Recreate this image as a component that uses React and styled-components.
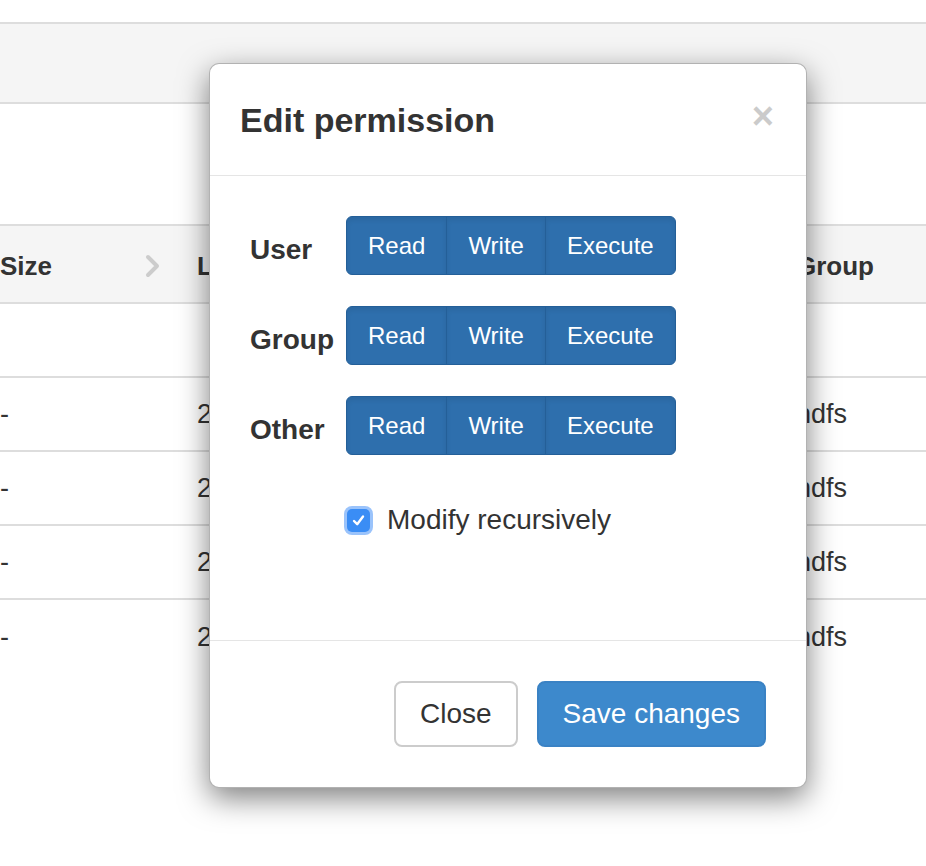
import React from 'react';
import styled, { createGlobalStyle } from 'styled-components';

const GlobalStyle = createGlobalStyle`
  html, body {
    margin: 0;
    padding: 0;
    background: #fff;
    font-family: "Liberation Sans", Arial, sans-serif;
    color: #333;
  }
`;

const Page = styled.div`
  position: relative;
  width: 926px;
  height: 866px;
  overflow: hidden;
  padding-top: 22px;
  box-sizing: border-box;
`;

const Toolbar = styled.div`
  height: 78px;
  background: #f5f5f5;
  border-top: 2px solid #ddd;
  border-bottom: 2px solid #ddd;
  margin-bottom: 120px;
`;

const Table = styled.div`
  display: flex;
  flex-direction: column;
`;

const Row = styled.div`
  display: grid;
  grid-template-columns: 145px 52px 599px 1fr;
  align-items: center;
  box-sizing: border-box;
  height: ${(p) => (p.head ? 80 : 74)}px;
  padding-top: ${(p) => (p.head ? 4 : 1)}px;
  background: ${(p) => (p.head ? '#f5f5f5' : '#fff')};
  border-top: ${(p) => (p.head ? '2px solid #ddd' : 'none')};
  border-bottom: ${(p) => (p.last ? 'none' : '2px solid #ddd')};
  font-size: ${(p) => (p.head ? 26 : 27)}px;
  font-weight: ${(p) => (p.head ? 'bold' : 'normal')};
  white-space: nowrap;
`;

const Cell = styled.div`
  overflow: hidden;
  display: flex;
  align-items: center;
`;

const Chevron = () => (
  <svg width="16" height="24" viewBox="0 0 16 24">
    <polyline points="3,3 12,12 3,21" fill="none" stroke="#ccc" strokeWidth="4" strokeLinejoin="round" strokeLinecap="round" />
  </svg>
);

const Modal = styled.div`
  position: absolute;
  left: 209px;
  top: 63px;
  width: 598px;
  box-sizing: border-box;
  background: #fff;
  border: 1px solid rgba(0, 0, 0, 0.3);
  border-radius: 10px;
  box-shadow: 0 10px 30px rgba(0, 0, 0, 0.5);
  display: flex;
  flex-direction: column;
`;

const Header = styled.div`
  height: 111px;
  display: flex;
  align-items: center;
  justify-content: space-between;
  padding: 0 32px 0 30px;
  border-bottom: 1px solid #e5e5e5;
`;

const Title = styled.h4`
  margin: 0;
  padding-top: 2px;
  font-size: 34px;
  font-weight: bold;
  line-height: 1.1;
  color: #333;
`;

const CloseX = styled.button`
  border: 0;
  background: none;
  padding: 0;
  margin-top: -8px;
  font-family: "Liberation Sans", Arial, sans-serif;
  font-size: 38px;
  font-weight: bold;
  line-height: 1;
  color: #000;
  opacity: 0.2;
`;

const Body = styled.div`
  height: 464px;
  box-sizing: border-box;
  padding: 40px 40px;
  display: flex;
  flex-direction: column;
  gap: 31px;
`;

const PermRow = styled.div`
  display: flex;
  align-items: flex-start;
`;

const Label = styled.div`
  width: 96px;
  padding-top: 20px;
  font-size: 28px;
  font-weight: bold;
  line-height: 28px;
  color: #333;
`;

const BtnGroup = styled.div`
  display: flex;
`;

const ToggleBtn = styled.button`
  height: 59px;
  padding: 0 21px;
  font-family: "Liberation Sans", Arial, sans-serif;
  font-size: 24px;
  line-height: 57px;
  color: #fff;
  background: #2e6fad;
  border: 1px solid #245f98;
  margin-left: -1px;
  box-shadow: inset 0 3px 5px rgba(0, 0, 0, 0.08);
  &:first-child {
    margin-left: 0;
    border-radius: 6px 0 0 6px;
  }
  &:last-child {
    border-radius: 0 6px 6px 0;
  }
`;

const CheckRow = styled.label`
  display: flex;
  align-items: center;
  gap: 17px;
  margin-top: 18px;
  padding-left: 97px;
  font-size: 28px;
  line-height: 32px;
  color: #333;
`;

const CheckBox = styled.span`
  width: 23px;
  height: 23px;
  border-radius: 5px;
  background: #3a8df5;
  box-shadow: 0 0 0 3px rgba(120, 175, 250, 0.75);
  display: flex;
  align-items: center;
  justify-content: center;
`;

const Footer = styled.div`
  border-top: 1px solid #e5e5e5;
  padding: 40px 40px 40px;
  display: flex;
  justify-content: flex-end;
  gap: 19px;
`;

const FooterBtn = styled.button`
  height: 66px;
  padding: 0 24px;
  font-family: "Liberation Sans", Arial, sans-serif;
  font-size: 28px;
  border-radius: 8px;
  color: ${(p) => (p.primary ? '#fff' : '#333')};
  background: ${(p) => (p.primary ? '#3d89cc' : '#fff')};
  border: 2px solid ${(p) => (p.primary ? '#3a82c4' : '#ccc')};
`;

const rows = ['', '2017-03-21 10:42', '2017-03-21 10:43', '2017-03-21 10:44', '2017-03-21 10:45'];

export default function App() {
  return (
    <Page>
      <GlobalStyle />
      <Toolbar />
      <Table>
        <Row head>
          <Cell>Size</Cell>
          <Cell><Chevron /></Cell>
          <Cell>Last Modified</Cell>
          <Cell>Group</Cell>
        </Row>
        {rows.map((d, i) => (
          <Row key={i} last={i === rows.length - 1}>
            <Cell>{i === 0 ? '' : '-'}</Cell>
            <Cell />
            <Cell>{d}</Cell>
            <Cell>{i === 0 ? '' : 'hdfs'}</Cell>
          </Row>
        ))}
      </Table>

      <Modal>
        <Header>
          <Title>Edit permission</Title>
          <CloseX aria-label="Close">×</CloseX>
        </Header>
        <Body>
          {['User', 'Group', 'Other'].map((who) => (
            <PermRow key={who}>
              <Label>{who}</Label>
              <BtnGroup>
                <ToggleBtn>Read</ToggleBtn>
                <ToggleBtn>Write</ToggleBtn>
                <ToggleBtn>Execute</ToggleBtn>
              </BtnGroup>
            </PermRow>
          ))}
          <CheckRow>
            <CheckBox>
              <svg width="15" height="15" viewBox="0 0 15 15">
                <polyline points="3,8 6.2,11.2 12,3.5" fill="none" stroke="#fff" strokeWidth="2.4" strokeLinecap="round" strokeLinejoin="round" />
              </svg>
            </CheckBox>
            Modify recursively
          </CheckRow>
        </Body>
        <Footer>
          <FooterBtn>Close</FooterBtn>
          <FooterBtn primary>Save changes</FooterBtn>
        </Footer>
      </Modal>
    </Page>
  );
}
